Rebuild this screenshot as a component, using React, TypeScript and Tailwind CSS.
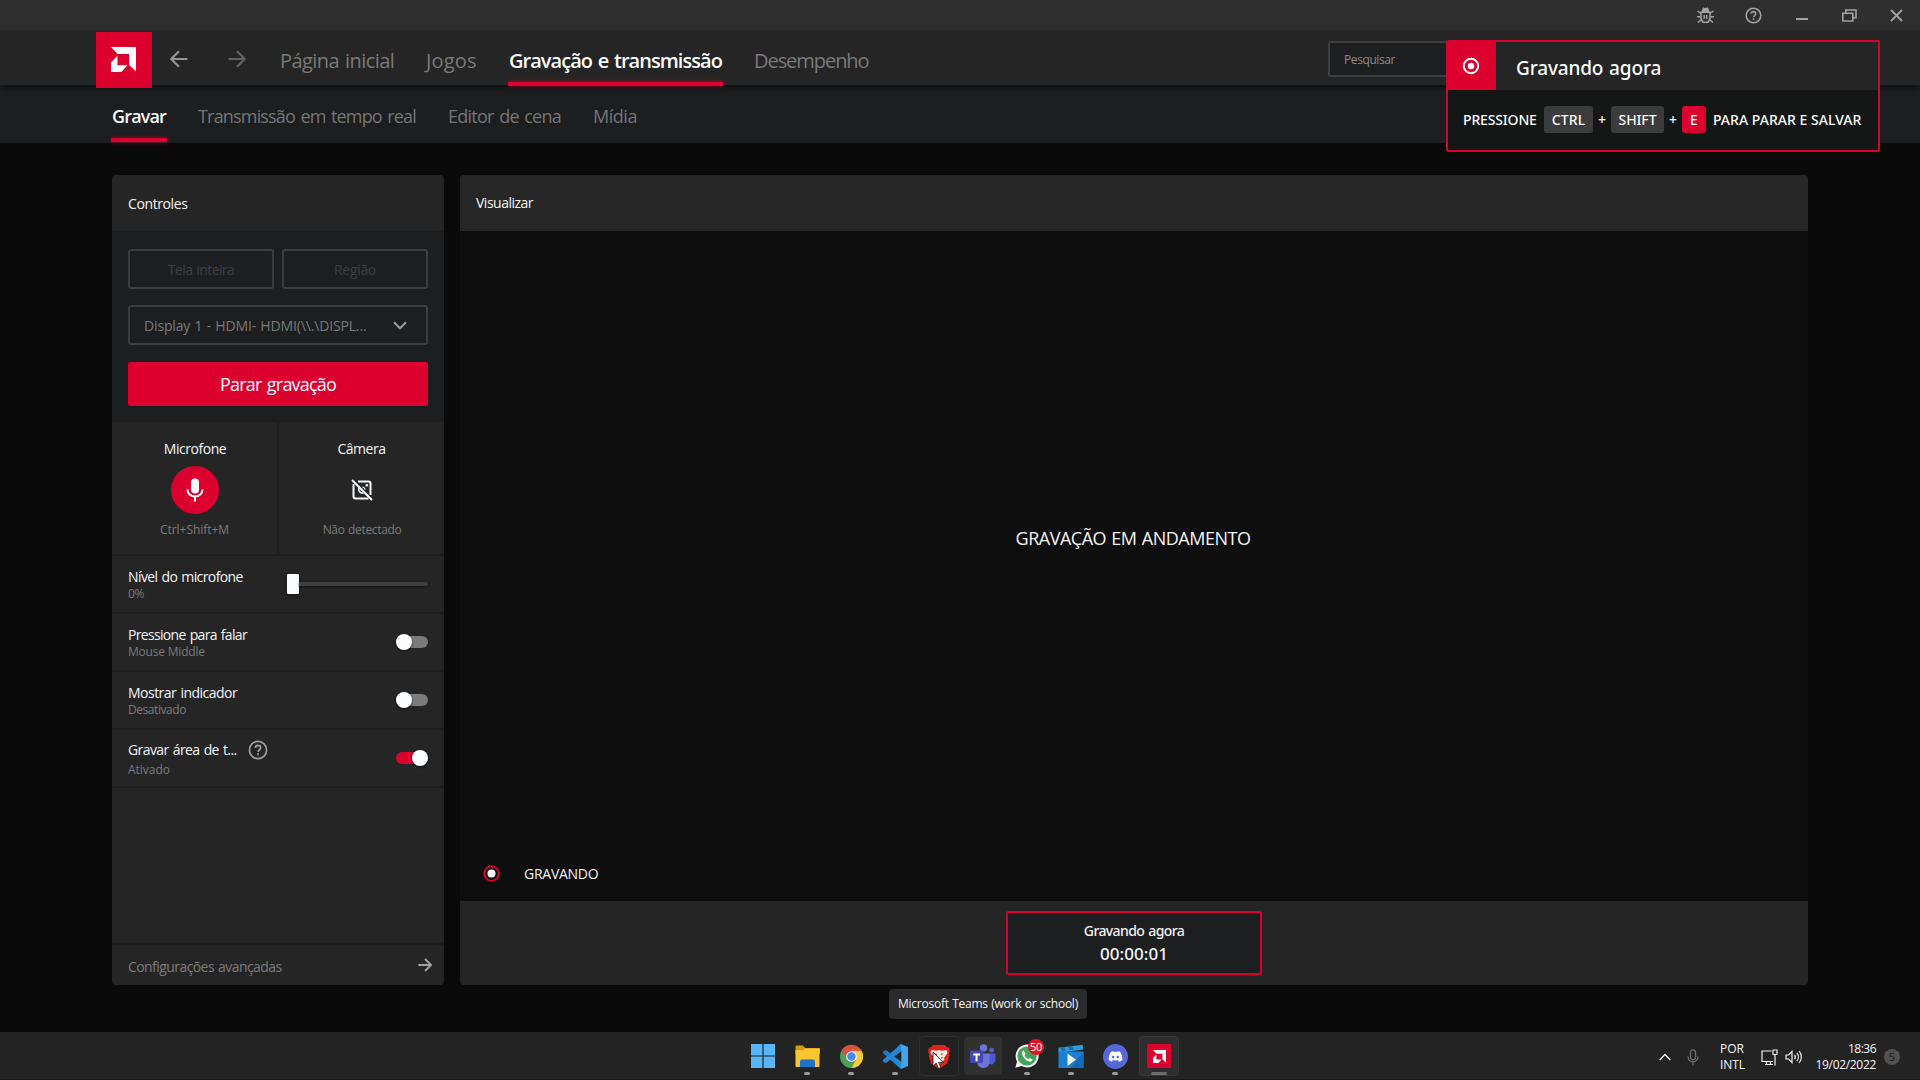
import React from 'react';
import { FaDiscord } from 'react-icons/fa';

const RED = '#dc002f';

function AmdGlyph({ size }: { size: number }) {
  return (
    <svg width={size} height={size} viewBox="0 0 24 24" fill="#fafcfd">
      <path d="M0 0h24v23.5l-6.6-6.2V6.7H6.4z" />
      <path d="M6.2 8.4v9.2h9.6L10 24H0v-9.2z" />
    </svg>
  );
}

function ArrowIcon({ size, color, flip, stroke = 2.2 }: { size: number; color: string; flip?: boolean; stroke?: number }) {
  return (
    <svg width={size} height={size} viewBox="0 0 18 18" fill="none" stroke={color} strokeWidth={stroke} className={flip ? '-scale-x-100' : ''}>
      <path d="M0.5 9H16.5M9 1.2L16.8 9L9 16.8" />
    </svg>
  );
}

function HelpIcon({ size, stroke }: { size: number; stroke: number }) {
  return (
    <svg width={size} height={size} viewBox="0 0 20 20" fill="none" stroke="#a0a0a0" strokeWidth={stroke}>
      <circle cx="10" cy="10" r="8.6" />
      <path d="M7.4 8c0-1.5 1.1-2.6 2.6-2.6s2.6 1 2.6 2.5c0 1.8-2.5 1.9-2.5 4" />
      <path d="M10.1 13.2v2" />
    </svg>
  );
}

function BugIcon() {
  return (
    <svg width="17" height="17" viewBox="0 0 17 17" fill="none" stroke="#a3a3a3" strokeWidth="1.5">
      <path d="M5.5 4.5a3 3 0 0 1 6 0z" fill="#a3a3a3" />
      <path d="M6 0.8l1.2 1.4M11 .8L9.800 2.200M4 5.200h9v6.300l-2 3.700H6l-2-3.700zM0.500 4l3.500 2.500M16.500 4L13 6.500M0 9.700h4M17 9.700h-4M1 15.500L4.500 12.500M16 15.500L12.500 12.500M7.200 8v4M9.800 8v4" />
    </svg>
  );
}

function TitleBar() {
  return (
    <div className="flex h-[31px] shrink-0 items-center justify-end bg-[#2f2f2f] pr-4">
      <div className="flex w-12 justify-center pr-px"><BugIcon /></div>
      <div className="flex w-12 justify-center pr-px"><HelpIcon size={17} stroke={1.9} /></div>
      <div className="flex w-12 justify-center pr-px pt-[7px]"><div className="h-[2px] w-3 bg-[#a3a3a3]" /></div>
      <div className="flex w-12 justify-center pr-px">
        <svg width="15" height="13" viewBox="0 0 15 13" fill="none" stroke="#a3a3a3" strokeWidth="1.6">
          <path d="M.8 4.300h10v7.700h-10zM3.800 4V1h10.200v7.700h-3" />
        </svg>
      </div>
      <div className="ml-[14px] flex w-4 justify-center">
        <svg width="13" height="13" viewBox="0 0 13 13" fill="none" stroke="#a3a3a3" strokeWidth="1.8">
          <path d="M1 1l11 11M12 1L1 12" />
        </svg>
      </div>
    </div>
  );
}

function Header() {
  return (
    <div className="relative z-10 flex h-[54px] shrink-0 bg-[#252525] pl-24 shadow-[0_3px_6px_#0d100f]">
      <div className="mt-px flex h-14 w-14 items-center justify-center bg-[#dc002f] pb-px pr-px">
        <AmdGlyph size={25} />
      </div>
      <div className="ml-[18px] mt-[19px]"><ArrowIcon size={18} color="#949494" flip /></div>
      <div className="ml-10 mt-[19px]"><ArrowIcon size={18} color="#626262" /></div>
      <nav className="ml-[34px] flex h-[55px] gap-8 whitespace-nowrap pt-4 text-[20px] leading-7 text-[#797979]">
        <span className="w-[114px] tracking-[-0.58px] [word-spacing:1.500px]">Página inicial</span>
        <span className="w-[51px] tracking-[0.2px]">Jogos</span>
        <span className="relative w-[213px] font-semibold tracking-[-0.97px] text-[#fafcfd] [word-spacing:1.500px]">
          Gravação e transmissão
          <span className="absolute -left-px -right-px bottom-0 h-1 bg-[#dc002f] shadow-[0_0_4px_#dc002faa]" />
        </span>
        <span className="w-[114px] tracking-[-1.050px]">Desempenho</span>
      </nav>
      <div className="ml-auto mr-[438px] mt-[10px] flex h-9 w-[154px] items-center rounded-[2px] border-2 border-[#3d3d3d] bg-[#1c1e20] pl-[14px] pt-px text-[12px] tracking-[-0.41px] text-[#8b8b8b]">
        Pesquisar
      </div>
    </div>
  );
}

function SubHeader() {
  return (
    <div className="flex h-[58px] shrink-0 gap-8 whitespace-nowrap bg-[#1c1e20] pl-28 pt-[18px] text-[18px] leading-[26px] text-[#757575]">
      <span className="relative h-[39px] w-[54px] font-semibold tracking-[-0.85px] text-[#fafcfd]">
        Gravar
        <span className="absolute -left-px -right-px bottom-0 h-1 bg-[#dc002f] shadow-[0_0_4px_#dc002faa]" />
      </span>
      <span className="w-[218px] tracking-[-0.82px] [word-spacing:1.500px]">Transmissão em tempo real</span>
      <span className="w-[113px] tracking-[-0.74px] [word-spacing:1.500px]">Editor de cena</span>
      <span className="tracking-[-0.46px]">Mídia</span>
    </div>
  );
}

function Switch({ on }: { on?: boolean }) {
  return (
    <div className={'relative flex h-4 w-8 items-center ' + (on ? 'justify-end' : 'justify-start')}>
      <div className={'absolute inset-x-0 top-[2px] h-3 rounded-full ' + (on ? 'bg-[#dc002f]' : 'bg-[#7b7b7b]')} />
      <div className="relative h-4 w-4 rounded-full bg-[#fafcfd] shadow-[0_1px_3px_rgba(0,0,0,0.6)]" />
    </div>
  );
}

function SettingRow({ title, titleClass, sub, subClass, children }: { title: string; titleClass: string; sub: string; subClass: string; children: React.ReactNode }) {
  return (
    <div className="flex h-[58px] items-start justify-between border-b-2 border-[#1e1e1e] px-4">
      <div className="whitespace-nowrap pt-[11px]">
        <div className={'text-[14px] leading-5 text-[#f4f4f4] [word-spacing:1px] ' + titleClass}>{title}</div>
        <div className={'-mt-px text-[12px] leading-4 text-[#7b7b7b] ' + subClass}>{sub}</div>
      </div>
      {children}
    </div>
  );
}

function Controls() {
  return (
    <section className="flex h-[810px] w-[332px] flex-col overflow-hidden rounded-[4px] bg-[#252525]">
      <div className="flex h-14 shrink-0 items-center px-4 text-[14px] tracking-[-0.4px] text-[#f4f4f4]">Controles</div>
      <div className="flex h-[191px] shrink-0 flex-col bg-[#1c1e20] px-4 pt-[18px]">
        <div className="flex gap-2 text-[14px] text-[#3f3f41]">
          <div className="flex h-10 w-[146px] items-center justify-center rounded-[3px] border-2 border-[#3c3c3c] tracking-[-0.6px] [word-spacing:1px]">Tela inteira</div>
          <div className="flex h-10 w-[146px] items-center justify-center rounded-[3px] border-2 border-[#3c3c3c] tracking-[-0.31px]">Região</div>
        </div>
        <div className="mt-4 flex h-10 items-center justify-between rounded-[3px] border-2 border-[#3c3c3c] pl-[14px] pr-[19px] text-[14px] tracking-[-0.15px] text-[#797979] [word-spacing:0.800px]">
          {'Display 1 - HDMI- HDMI(\\\\.\\DISPL...'}
          <svg width="14" height="9" viewBox="0 0 14 9" fill="none" stroke="#999" strokeWidth="2.2">
            <path d="M1 1.200l6 6 6-6" />
          </svg>
        </div>
        <div className="mt-[17px] flex h-11 items-center justify-center rounded-[2px] bg-[#dc002f] text-[18px] tracking-[-0.8px] text-[#fafcfd] [word-spacing:1.500px]">
          Parar gravação
        </div>
      </div>
      <div className="flex h-[134px] shrink-0 whitespace-nowrap border-b-2 border-[#1e1e1e]">
        <div className="flex w-[167px] flex-col items-center border-r-2 border-[#1e1e1e] pt-[17px]">
          <span className="pl-px text-[14px] leading-5 tracking-[-0.45px] text-[#f4f4f4]">Microfone</span>
          <div className="mt-[7px] flex h-12 w-12 items-center justify-center rounded-full bg-[#dc002f]">
            <svg width="18" height="24" viewBox="0 0 18 24" fill="none" stroke="#fafcfd" strokeWidth="2">
              <rect x="5" y="0.500" width="8" height="15" rx="4" fill="#fafcfd" stroke="none" />
              <path d="M1.500 11.500a7.500 7 0 0 0 15 0M9 18.500v5" />
            </svg>
          </div>
          <span className="mt-[8px] text-[12px] leading-4 tracking-[-0.05px] text-[#7b7b7b]">Ctrl+Shift+M</span>
        </div>
        <div className="flex flex-1 flex-col items-center pt-[17px]">
          <span className="text-[14px] leading-5 tracking-[-0.49px] text-[#f4f4f4]">Câmera</span>
          <div className="mt-[7px] flex h-12 w-12 items-center justify-center">
            <svg width="22" height="22" viewBox="0 0 22 22" fill="none" stroke="#fafcfd" strokeWidth="2">
              <path d="M7 2.500h10.500a2 2 0 0 1 2 2V16M17.500 19.500H4.500a2 2 0 0 1-2-2V5" />
              <path d="M8 9a3.500 3.500 0 0 0 4.500 4.700" strokeWidth="1.700" />
              <path d="M11.500 8a3.500 3.500 0 0 1 2.700 2.700" strokeWidth="1.200" />
              <circle cx="15.800" cy="6.200" r="1.300" fill="#fafcfd" stroke="none" />
              <path d="M1 1l20 20" />
            </svg>
          </div>
          <span className="mt-[8px] pl-px text-[12px] leading-4 tracking-[-0.35px] text-[#7b7b7b] [word-spacing:0.800px]">Não detectado</span>
        </div>
      </div>
      <SettingRow title="Nível do microfone" titleClass="tracking-[-0.6px]" sub="0%" subClass="tracking-[-0.39px]">
        <div className="mt-[18px] flex h-5 w-[141px] items-center">
          <div className="h-5 w-3 rounded-[1px] bg-[#fafcfd] shadow-[0_1px_4px_rgba(0,0,0,0.6)]" />
          <div className="h-1 flex-1 rounded-r-full bg-[#3e3e3e] shadow-[0_1px_3px_rgba(0,0,0,0.5)]" />
        </div>
      </SettingRow>
      <SettingRow title="Pressione para falar" titleClass="tracking-[-0.67px]" sub="Mouse Middle" subClass="tracking-[-0.2px]">
        <div className="mt-5"><Switch /></div>
      </SettingRow>
      <SettingRow title="Mostrar indicador" titleClass="tracking-[-0.52px]" sub="Desativado" subClass="tracking-[-0.44px]">
        <div className="mt-5"><Switch /></div>
      </SettingRow>
      <div className="flex h-[58px] items-start justify-between whitespace-nowrap border-b-2 border-[#1e1e1e] px-4">
        <div className="pt-[10px]">
          <div className="flex items-center gap-[10px] text-[14px] leading-5 tracking-[-0.58px] text-[#f4f4f4] [word-spacing:1px]">
            <span className="w-[110px]">Gravar área de t...</span>
            <HelpIcon size={20} stroke={1.7} />
          </div>
          <div className="mt-[2px] text-[12px] leading-4 tracking-[-0.02px] text-[#7b7b7b]">Ativado</div>
        </div>
        <div className="mt-5"><Switch on /></div>
      </div>
      <div className="mt-auto flex h-[42px] items-center justify-between border-t-2 border-[#1e1e1e] pl-4 pr-[12px] text-[14px] tracking-[-0.57px] text-[#7b7b7b] [word-spacing:1px]">
        <span className="pt-[2px]">Configurações avançadas</span>
        <ArrowIcon size={14} color="#a0a0a0" stroke={2.600} />
      </div>
    </section>
  );
}

function Preview() {
  return (
    <section className="flex h-[810px] w-[1348px] flex-col overflow-hidden rounded-[4px] bg-[#0e0e0e] text-[14px] text-[#f4f4f4]">
      <div className="flex h-14 shrink-0 items-center bg-[#262626] px-4 pb-px tracking-[-0.5px]">Visualizar</div>
      <div className="flex h-[614px] items-center justify-center pr-[2px] text-[18px] tracking-[-0.48px] [word-spacing:1px]">GRAVAÇÃO EM ANDAMENTO</div>
      <div className="flex flex-1 items-center pl-[23px]">
        <svg width="17" height="17" viewBox="0 0 17 17">
          <circle cx="8.500" cy="8.500" r="7.300" fill="none" stroke={RED} strokeWidth="1.900" />
          <circle cx="8.500" cy="8.500" r="4" fill="#fff" />
        </svg>
        <span className="ml-6 tracking-[-0.26px]">GRAVANDO</span>
      </div>
      <div className="flex h-[84px] shrink-0 items-center justify-center bg-[#252525]">
        <div className="flex h-16 w-64 flex-col items-center rounded-[3px] border-2 border-[#dc002f] bg-[#1c1e20] pt-2 font-['Noto_Sans',sans-serif] font-medium">
          <span className="leading-5 tracking-[-0.6px] [word-spacing:1px]">Gravando agora</span>
          <span className="mt-px text-[17px] leading-6 tracking-[0.05px]">00:00:01</span>
        </div>
      </div>
    </section>
  );
}

function Notification() {
  return (
    <div className="absolute left-[1446px] top-10 z-20 h-28 w-[434px] overflow-hidden rounded-[3px] border-2 border-[#dc002f] bg-[#151716] font-['Noto_Sans',sans-serif] font-medium text-[#fafcfd]">
      <div className="flex h-12 bg-[#252525]">
        <div className="flex w-12 items-center justify-center bg-[#dc002f] pr-[2px]">
          <svg width="18" height="18" viewBox="0 0 18 18">
            <circle cx="9" cy="9" r="7.200" fill="none" stroke="#fff" strokeWidth="1.900" />
            <circle cx="9" cy="9" r="3.200" fill="#fff" />
          </svg>
        </div>
        <div className="pl-5 pt-[12px] text-[19px] leading-7 tracking-[-0.15px] [word-spacing:1px]">Gravando agora</div>
      </div>
      <div className="flex items-center whitespace-nowrap pl-[15px] pt-4 text-[14px] leading-[27px]">
        <span className="w-[81px] tracking-[-0.16px]">PRESSIONE</span>
        <kbd className="w-[49px] rounded-[3px] bg-[#3c3c3c] text-center font-['Noto_Sans',sans-serif] tracking-[0.1px]">CTRL</kbd>
        <span className="w-[18px] text-center">+</span>
        <kbd className="w-[53px] rounded-[3px] bg-[#3c3c3c] text-center font-['Noto_Sans',sans-serif] tracking-[-0.1px]">SHIFT</kbd>
        <span className="w-[18px] text-center">+</span>
        <kbd className="w-6 rounded-[3px] bg-[#dc002f] text-center font-['Noto_Sans',sans-serif]">E</kbd>
        <span className="ml-[7px] tracking-[0.03px]">PARA PARAR E SALVAR</span>
      </div>
    </div>
  );
}

function WindowsIcon() {
  return (
    <svg width="24" height="24" viewBox="0 0 24 24">
      <path d="M0 0h11.400v11.400H0zM12.600 0H24v11.400H12.600zM0 12.600h11.400V24H0zM12.600 12.600H24V24H12.600z" fill="#5bb4f5" />
    </svg>
  );
}

function FolderIcon() {
  return (
    <svg width="25" height="24" viewBox="0 0 25 24">
      <path d="M.5 2.500a1 1 0 0 1 1-1h6.500l2 2.500h14a1 1 0 0 1 1 1v5H.5z" fill="#d9960f" />
      <path d="M.5 6h7.500l2-1.500h14.500V22a1 1 0 0 1-1 1h-22a1 1 0 0 1-1-1z" fill="#fbc52f" />
      <path d="M5 23v-5.500a2 2 0 0 1 2-2h11a2 2 0 0 1 2 2V23z" fill="#1d74c6" />
    </svg>
  );
}

function ChromeIcon() {
  return (
    <svg width="23" height="23" viewBox="0 0 24 24">
      <circle cx="12" cy="12" r="12" fill="#4c9e57" />
      <path d="M1.600 6A12 12 0 0 1 22.400 6L12 7.500 7.700 14.500z" fill="#d9503f" />
      <path d="M22.400 6A12 12 0 0 1 12 24l5-9.500L12 6z" fill="#f7c935" />
      <circle cx="12" cy="12" r="5.600" fill="#f4f4f4" />
      <circle cx="12" cy="12" r="4.400" fill="#4589ee" />
    </svg>
  );
}

function CodeIcon() {
  return (
    <svg width="25" height="25" viewBox="0 0 24 24">
      <path d="M17 0L7.400 9.200 2.800 5.700 0 7.200v1.600l17.200 15L19 16.500v-2z" fill="#1c7cc9" />
      <path d="M17 24L7.400 14.800l-4.600 3.500L0 16.800v-1.600L17.300 .2 19 8z" fill="#2387d6" />
      <path d="M17 0l7 2.800v18.400L17 24l.6-6.700V6.700z" fill="#41a6ee" />
      <path d="M17.600 7v10L10.800 12z" fill="#232323" />
    </svg>
  );
}

function BraveIcon() {
  return (
    <svg width="22" height="25" viewBox="0 0 22 25">
      <path d="M5 1h12l2 2.400 1.600-.2L22 7l-1 3 .3 2-2.300 7.500L11 25l-8-5.500L.7 12 1 10 0 7l1.400-3.800 1.600.2z" fill="#e3231b" />
      <path d="M3.500 6l4.500 .8 3-.8 3 .8 4.500-.8 1 3-3.500 5 .5 2-3 1.500L11 20l-2-2.500L6 16l.5-2L2.500 9z" fill="#fbeee6" />
      <path d="M6.500 9l3 .8-.8 1.700zM15.500 9l-3 .8.8 1.700zM13 13l2.500.500-2 1.500z" fill="#d8442c" />
    </svg>
  );
}

function TeamsIcon() {
  return (
    <svg width="26" height="25" viewBox="0 0 26 25">
      <circle cx="21.500" cy="6" r="2.500" fill="#5059c9" />
      <path d="M17 9.500h7.500a1 1 0 0 1 1 1V16a4.500 4.500 0 0 1-7 3.700z" fill="#5059c9" />
      <circle cx="13.500" cy="4" r="3.700" fill="#6a74d6" />
      <path d="M8 9.500h11.500V18a6.200 6.200 0 0 1-12 2z" fill="#6a74d6" />
      <rect x="0" y="6.500" width="13" height="12.500" rx="1.200" fill="#3f4ab5" />
      <path d="M3.300 9.500h6.600v1.900H7.600v5.800h-2v-5.800H3.300z" fill="#fff" />
    </svg>
  );
}

function MoviesIcon() {
  return (
    <svg width="26" height="25" viewBox="0 0 26 25">
      <path d="M.5 3.800L24.500.8l.8 4.700L.5 9z" fill="#2f9bdc" />
      <path d="M2 3.600l4-.5 2 3.700-4 .6zM10 2.600l4-.5 2 3.700-4 .6z" fill="#1c6fae" />
      <path d="M.5 7.500h25v15.500a1 1 0 0 1-1 1h-23a1 1 0 0 1-1-1z" fill="#1c80d2" />
      <path d="M25.500 8v15a1 1 0 0 1-1 1H12z" fill="#1669b4" />
      <path d="M9.500 9.500v12.500l8.500-6.200z" fill="#f4f4f4" />
    </svg>
  );
}

function Task({ children, dot, tile }: { children: React.ReactNode; dot?: boolean; tile?: string }) {
  return (
    <div className={'relative flex h-10 w-10 items-center justify-center rounded-[4px] border ' + (tile ?? 'border-transparent')}>
      {children}
      {dot && <span className="absolute bottom-0 left-1/2 h-[3px] w-[6px] -translate-x-1/2 rounded-full bg-[#9b9b9b]" />}
    </div>
  );
}

function TaskBar() {
  return (
    <div className="relative mt-auto flex h-12 shrink-0 items-start justify-center border-b border-[#1b1b1b] bg-[#232323] pl-[2px] pt-1">
      <div className="flex gap-1">
        <Task><WindowsIcon /></Task>
        <Task dot><FolderIcon /></Task>
        <Task dot><ChromeIcon /></Task>
        <Task dot><CodeIcon /></Task>
        <Task tile="border-[#303030] bg-[#212121]">
          <BraveIcon />
          <svg className="absolute left-[12px] top-[14px]" width="13" height="19" viewBox="0 0 13 19">
            <path d="M1 1v14l3.200-2.800 2.300 5.300 2.400-1-2.300-5.200h4.600z" fill="#fff" stroke="#222" strokeWidth=".9" />
          </svg>
        </Task>
        <Task tile="border-[#232323] bg-[#303030] bg-clip-padding"><TeamsIcon /></Task>
        <Task dot>
          <svg width="24" height="24" viewBox="0 0 24 24">
            <path d="M12 .5a11.500 11.500 0 0 0-10 17L.3 23.700l6.400-1.600A11.500 11.500 0 1 0 12 .5z" fill="#f2f5f2" />
            <circle cx="12" cy="12" r="9.600" fill="#43a35a" />
            <path d="M8.500 6.500c-1.500.6-2 2.200-1.400 4 1 3.300 3.700 6 6.900 7 1.700.5 3.400-.3 3.700-1.900l-2.700-1.700-1.500 1.300c-1.700-.7-3.200-2.200-4-4l1.100-1.300z" fill="#f2f5f2" />
          </svg>
          <span className="absolute left-[20px] top-[2px] flex h-4 w-4 items-center justify-center rounded-full bg-[#e5141c] text-[11px] tracking-[-0.4px] text-white">50</span>
        </Task>
        <Task dot><MoviesIcon /></Task>
        <Task dot>
          <span className="flex h-[25px] w-[25px] items-center justify-center rounded-full bg-[#5767d8] text-white"><FaDiscord size={15} /></span>
        </Task>
        <Task tile="border-[#383838] bg-[#2e2e2e]">
          <span className="flex h-6 w-6 items-center justify-center bg-[#dc002f]"><AmdGlyph size={13} /></span>
          <span className="absolute bottom-0 left-[11px] h-[3px] w-4 rounded-full bg-[#6b6b6b]" />
        </Task>
      </div>
      <div className="absolute right-5 top-px flex h-12 items-center text-[12px] leading-4 text-[#f4f4f4]">
        <svg width="12" height="8" viewBox="0 0 12 8" fill="none" stroke="#f0f0f0" strokeWidth="1.300"><path d="M.7 7L6 1.500 11.300 7" /></svg>
        <svg className="ml-4" width="12" height="17" viewBox="0 0 12 17" fill="none" stroke="#6a6a6a" strokeWidth="1.300">
          <rect x="3.500" y=".8" width="5" height="10" rx="2.500" />
          <path d="M1 7.500a5 5.500 0 0 0 10 0M6 13v3.500" />
        </svg>
        <div className="ml-[21px] w-[25px]"><div>POR</div><div className="tracking-[-0.1px]">INTL</div></div>
        <svg className="ml-4" width="17" height="17" viewBox="0 0 17 17" fill="none" stroke="#f0f0f0" strokeWidth="1.200">
          <path d="M10.500 2H1v10.500h11M4 15.500h8M5.500 12.500v3M9.500 12.500v3M12 1h4v4.500h-4zM14 5.500v11" />
        </svg>
        <svg className="ml-[7px]" width="18" height="14" viewBox="0 0 18 14" fill="none" stroke="#f0f0f0" strokeWidth="1.200">
          <path d="M1 5h2.500L7 1.500v11L3.500 9H1zM9.500 4.800a3.500 3.500 0 0 1 0 4.400M11.800 3a6 6 0 0 1 0 8M14.200 1.200a9 9 0 0 1 0 11.600" />
        </svg>
        <div className="-mt-px ml-3 w-[61px] text-right"><div className="tracking-[-0.52px]">18:36</div><div className="tracking-[-0.32px]">19/02/2022</div></div>
        <span className="ml-2 flex h-4 w-4 items-center justify-center rounded-full bg-[#505050] text-[11px] text-[#1b1b1b]">5</span>
      </div>
    </div>
  );
}

export default function App() {
  return (
    <div className="relative flex h-[1080px] w-[1920px] flex-col overflow-hidden bg-[#0a0a0a] font-['Open_Sans',sans-serif]">
      <TitleBar />
      <Header />
      <SubHeader />
      <main className="flex gap-4 pl-28 pt-8">
        <Controls />
        <Preview />
      </main>
      <Notification />
      <div className="absolute left-[889px] top-[989px] flex h-[30px] w-[198px] items-center justify-center rounded-[4px] bg-[#2b2b2b] text-[12px] tracking-[-0.25px] text-[#f4f4f4] [word-spacing:0.600px]">
        Microsoft Teams (work or school)
      </div>
      <TaskBar />
    </div>
  );
}
